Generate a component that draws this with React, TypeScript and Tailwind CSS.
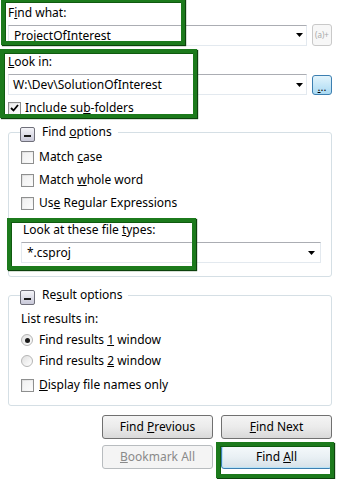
import React from 'react'

const font = "font-['Segoe_UI','Noto_Sans','Open_Sans',sans-serif]"

function Arrow() {
  return (
    <svg width="7" height="4" viewBox="0 0 7 4" className="shrink-0">
      <path d="M0 0H7L3.5 4Z" fill="#000" />
    </svg>
  )
}

function Combo({ text, className }: { text: string; className: string }) {
  return (
    <div
      className={`flex items-center h-[21px] border border-[#e3e9ef] border-t-[#abadb3] bg-white pl-[4px] pr-[3px] ${className}`}
    >
      <span className="flex-1 leading-[19px] whitespace-nowrap">{text}</span>
      <Arrow />
    </div>
  )
}

function CheckBox({ checked = false }: { checked?: boolean }) {
  return (
    <div className="w-[13px] h-[13px] shrink-0 border border-[#8e8f8f] bg-linear-to-br from-[#dcdcdc] to-white p-[1px]">
      <div className="w-full h-full bg-linear-to-br from-[#f0f0f0] to-[#fbfbfb] flex items-center justify-center">
        {checked && (
          <svg width="9" height="8" viewBox="0 0 9 8">
            <path d="M1 4L3.5 6.5L8 1" stroke="#000" strokeWidth="1.8" fill="none" />
          </svg>
        )}
      </div>
    </div>
  )
}

function Radio({ checked = false }: { checked?: boolean }) {
  return (
    <div className="w-[12px] h-[12px] shrink-0 rounded-full border border-[#b5b5b5] bg-linear-to-br from-[#e0e0e0] to-white flex items-center justify-center">
      {checked && <div className="w-[5px] h-[5px] rounded-full bg-[#1a1a1a]" />}
    </div>
  )
}

function Collapse() {
  return (
    <div className="w-[15px] h-[15px] shrink-0 rounded-[2px] border border-[#6f6f7a] bg-linear-to-b from-[#f4f4f8] to-[#c9c9d9] flex items-end justify-center pb-[4px] translate-y-[2px]">
      <div className="w-[7px] h-[2px] bg-[#1a1a1a]" />
    </div>
  )
}

function Option({ children, control }: { children: React.ReactNode; control: React.ReactNode }) {
  return (
    <div className="flex items-center h-[16px]">
      <div className="w-[18px] flex">{control}</div>
      <span className="leading-[16px] whitespace-nowrap">{children}</span>
    </div>
  )
}

function Legend({ children }: { children: React.ReactNode }) {
  return (
    <legend className="flex items-start h-[15px] pr-[6px] ml-[-1px]">
      <Collapse />
      <span className="ml-[7px] leading-[14px] whitespace-nowrap">{children}</span>
    </legend>
  )
}

function Btn({ children, kind = 'normal' }: { children: React.ReactNode; kind?: 'normal' | 'disabled' | 'default' }) {
  const styles = {
    normal: 'border-[#707070] bg-linear-to-b from-[#f4f4f4] via-[#ebebeb] to-[#d9d9d9] text-black',
    disabled: 'border-[#b8bcbf] bg-[#f4f4f4] text-[#8a8a8a]',
    default:
      'border-[#3c7fb1] bg-linear-to-b from-[#f5f9fb] via-[#e9f0f4] to-[#d6e1e8] text-black shadow-[inset_0_0_0_1px_#b8e3f7]',
  }[kind]
  return (
    <div className={`h-[24px] rounded-[3px] border flex items-center justify-center ${styles}`}>
      <span className="whitespace-nowrap">{children}</span>
    </div>
  )
}

function Highlight({ className }: { className: string }) {
  return (
    <div
      className={`absolute pointer-events-none border-4 border-[#1c7a1c] shadow-[1px_1px_1px_#0c420c,inset_1px_1px_0_#0f5a0f] ${className}`}
    />
  )
}

export default function App() {
  return (
    <div className={`relative w-[338px] h-[479px] bg-white overflow-hidden text-[12px] text-black ${font}`}>
      <div className="pl-[8px] pt-[5px]">
        <div className="h-[16px] leading-[16px]">
          F<u>i</u>nd what:
        </div>
        <div className="flex items-center mt-[3px]">
          <Combo text="ProjectOfInterest" className="w-[299px] pl-[5px]" />
          <div className="ml-[5px] w-[20px] h-[22px] rounded-[3px] border border-[#c9c9c9] bg-[#f7f7f7] flex items-center justify-center text-[8px] text-[#a8a8a8]">
            (a)+
          </div>
        </div>
        <div className="h-[16px] leading-[16px] mt-[8px]">
          <u>L</u>ook in:
        </div>
        <div className="flex items-center mt-[4px]">
          <Combo text="W:\Dev\SolutionOfInterest" className="w-[299px] pl-[2px]" />
          <div className="ml-[5px] w-[20px] h-[20px] rounded-[3px] border border-[#3c7fb1] bg-linear-to-b from-[#e3f4fc] to-[#a9d9f2] flex items-end justify-center text-[11px] leading-[12px] pb-[1px]">
            <span>
              <u>.</u>..
            </span>
          </div>
        </div>
        <div className="flex items-center h-[14px] mt-[6px]">
          <div className="w-[17px] flex">
            <CheckBox checked />
          </div>
          <span className="leading-[14px]">
            Include su<u>b</u>-folders
          </span>
        </div>
      </div>

      <fieldset className="ml-[8px] mt-[10px] w-[324px] border border-[#d5dfe5] rounded-[3px] pl-[12px] pr-[10px] pt-[9px] pb-[13px]">
        <Legend>
          Find <u>o</u>ptions
        </Legend>
        <div className="flex flex-col gap-[7px]">
          <Option control={<CheckBox />}>
            Match <u>c</u>ase
          </Option>
          <Option control={<CheckBox />}>
            Match <u>w</u>hole word
          </Option>
          <Option control={<CheckBox />}>
            Us<u>e</u> Regular Expressions
          </Option>
        </div>
        <div className="h-[16px] leading-[16px] mt-[11px] pl-[2px]">
          Look at these file <u>t</u>ypes:
        </div>
        <Combo text="*.csproj" className="mt-[4px] w-[300px] pl-[5px] pr-[5px]" />
      </fieldset>

      <fieldset className="ml-[8px] mt-[11px] w-[324px] border border-[#d5dfe5] rounded-[3px] pl-[12px] pr-[10px] pt-[8px] pb-[12px]">
        <Legend>
          Re<u>s</u>ult options
        </Legend>
        <div className="h-[16px] leading-[16px]">List results in:</div>
        <div className="mt-[5px]">
          <Option control={<Radio checked />}>
            Find results <u>1</u> window
          </Option>
        </div>
        <div className="mt-[5px]">
          <Option control={<Radio />}>
            Find results <u>2</u> window
          </Option>
        </div>
        <div className="mt-[8px]">
          <Option control={<CheckBox />}>
            <u>D</u>isplay file names only
          </Option>
        </div>
      </fieldset>

      <div className="grid grid-cols-2 gap-x-[8px] gap-y-[6px] ml-[102px] mt-[9px] w-[230px]">
        <Btn>
          Find <u>P</u>revious
        </Btn>
        <Btn>
          <u>F</u>ind Next
        </Btn>
        <Btn kind="disabled">
          <u>B</u>ookmark All
        </Btn>
        <Btn kind="default">
          Find <u>A</u>ll
        </Btn>
      </div>

      <Highlight className="left-[1px] top-[-2px] w-[184px] h-[47px]" />
      <Highlight className="left-[0px] top-[49px] w-[197px] h-[69px]" />
      <Highlight className="left-[7px] top-[218px] w-[189px] h-[52px]" />
      <Highlight className="left-[216px] top-[442px] w-[118px] h-[36px]" />
    </div>
  )
}
